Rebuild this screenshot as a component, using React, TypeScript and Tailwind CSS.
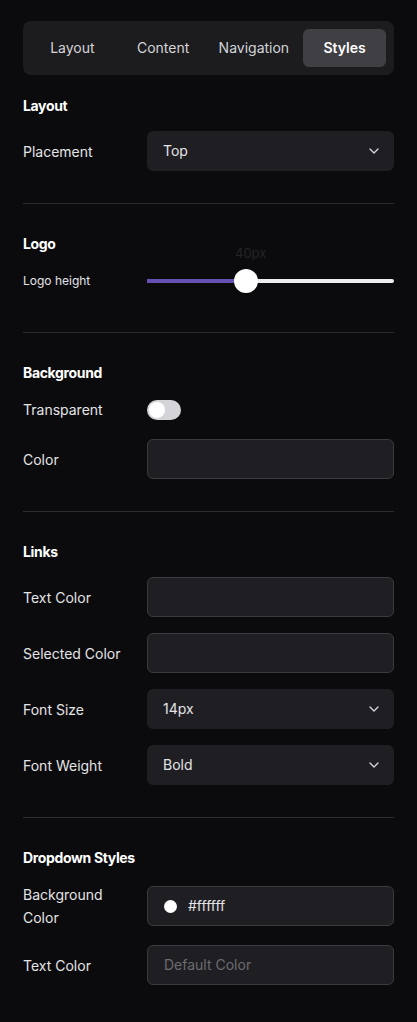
import { ChevronDown } from "lucide-react";

const tabs = ["Layout", "Content", "Navigation", "Styles"];

function Label({ children }: { children: React.ReactNode }) {
  return <span className="w-[124px] shrink-0 pr-3 text-sm leading-[23px] text-[#e4e4e7]">{children}</span>;
}

function Heading({ children }: { children: React.ReactNode }) {
  return <h3 className="mb-4 text-sm leading-[18px] font-bold tracking-tight text-white">{children}</h3>;
}

function Select({ value }: { value: string }) {
  return (
    <div className="flex h-10 flex-1 items-center justify-between rounded-md bg-[#1f1e22] pr-3 pl-4 text-sm text-[#e4e4e7]">
      <span>{value}</span>
      <ChevronDown size={16} strokeWidth={2} className="text-[#d4d4d8]" />
    </div>
  );
}

function Input({ children }: { children?: React.ReactNode }) {
  return (
    <div className="flex h-10 flex-1 items-center rounded-md border border-[#3a393e] bg-[#1f1e22] px-4 text-sm">
      {children}
    </div>
  );
}

function Row({ label, children }: { label: string; children: React.ReactNode }) {
  return (
    <div className="flex items-center">
      <Label>{label}</Label>
      {children}
    </div>
  );
}

export default function App() {
  return (
    <div className="min-h-[1022px] bg-[#0b0b0d] px-[23px] pt-[21px] font-['Inter',sans-serif]">
      <div className="grid grid-cols-4 gap-2 rounded-lg bg-[#1c1c1f] p-2">
        {tabs.map((tab) => (
          <button
            key={tab}
            type="button"
            className={
              tab === "Styles"
                ? "h-[38px] rounded-md bg-[#404044] text-sm font-semibold text-white"
                : "h-[38px] rounded-md text-sm text-[#d4d4d8]"
            }
          >
            {tab}
          </button>
        ))}
      </div>

      <section className="pt-[22px] pb-8">
        <Heading>Layout</Heading>
        <Row label="Placement">
          <Select value="Top" />
        </Row>
      </section>

      <section className="border-t border-[#2c2c30] pt-[31px] pb-[39px]">
        <Heading>Logo</Heading>
        <div className="flex h-6 items-center">
          <span className="w-[124px] shrink-0 pr-3 text-xs text-[#e4e4e7]">Logo height</span>
          <div className="relative h-6 flex-1">
            <div className="absolute top-[10px] right-0 left-0 h-1 rounded-full bg-[#ececee]" />
            <div className="absolute top-[10px] left-0 h-1 w-[99px] bg-[#6750b3]" />
            <div className="absolute top-0 left-[87px] h-6 w-6 rounded-full bg-white" />
            <span className="absolute -top-[25px] left-[88px] text-[13px] text-[#232327]">40px</span>
          </div>
        </div>
      </section>

      <section className="border-t border-[#2c2c30] pt-[31px] pb-8">
        <Heading>Background</Heading>
        <div className="flex flex-col gap-[18px]">
          <Row label="Transparent">
            <div className="flex h-5 w-[34px] items-center rounded-full bg-[#d4d4d8] px-0.5">
              <div className="h-4 w-4 rounded-full bg-white" />
            </div>
          </Row>
          <Row label="Color">
            <Input />
          </Row>
        </div>
      </section>

      <section className="border-t border-[#2c2c30] pt-[31px] pb-8">
        <Heading>Links</Heading>
        <div className="flex flex-col gap-4">
          <Row label="Text Color">
            <Input />
          </Row>
          <Row label="Selected Color">
            <Input />
          </Row>
          <Row label="Font Size">
            <Select value="14px" />
          </Row>
          <Row label="Font Weight">
            <Select value="Bold" />
          </Row>
        </div>
      </section>

      <section className="border-t border-[#2c2c30] pt-[31px] pb-8">
        <Heading>Dropdown Styles</Heading>
        <div className="flex flex-col gap-4">
          <Row label="Background Color">
            <Input>
              <span className="h-[13px] w-[13px] shrink-0 rounded-full bg-white" />
              <span className="ml-[11px] text-[#e4e4e7]">#ffffff</span>
            </Input>
          </Row>
          <Row label="Text Color">
            <Input>
              <span className="text-[#6b6b70]">Default Color</span>
            </Input>
          </Row>
        </div>
      </section>
    </div>
  );
}
